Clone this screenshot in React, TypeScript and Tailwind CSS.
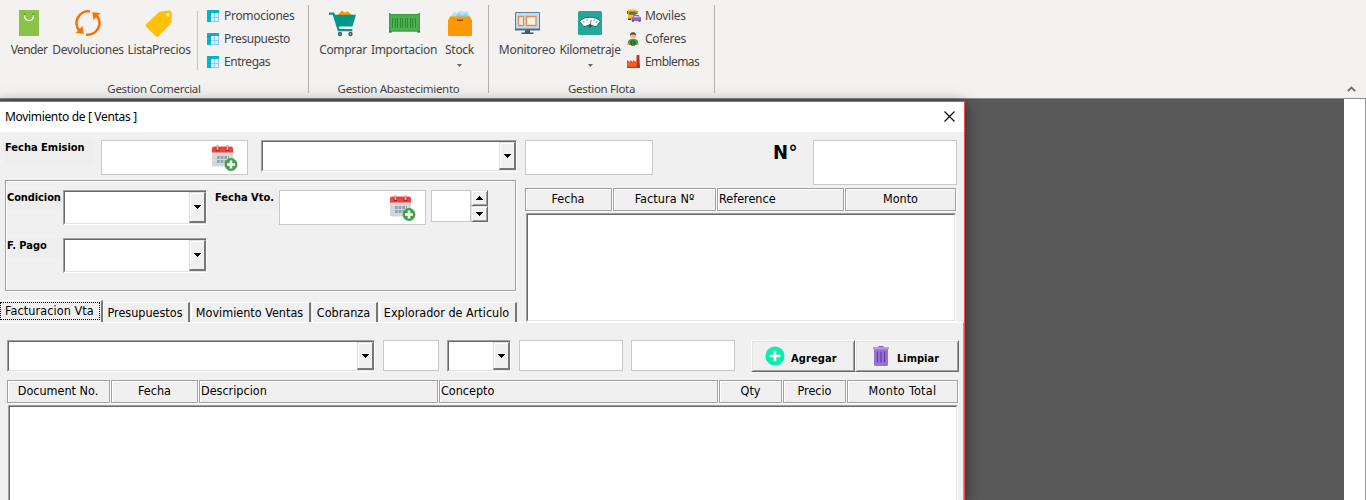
import React from "react";

type Kids = { children?: React.ReactNode };
type Box = { className?: string };

/* ---------- ribbon icons ---------- */

const BagIcon = () => (
  <svg width="20" height="26" viewBox="0 0 20 26">
    <path d="M0 0h20v26H0z" fill="#8bc34a" />
    <path d="M5.700 4.500v1.800a4.300 4.300 0 0 0 8.600 0V4.500" fill="none" stroke="#fff" strokeWidth="1.300" />
    <circle cx="5.700" cy="4.300" r="1.100" fill="#5f9632" />
    <circle cx="14.300" cy="4.300" r="1.100" fill="#5f9632" />
  </svg>
);

const RefreshIcon = () => (
  <svg width="26" height="26" viewBox="0 0 26 26">
    <g fill="none" stroke="#ff6f00" strokeWidth="2.600">
      <path d="M15 1.500A11.600 11.600 0 0 0 4.800 21" />
      <path d="M11 24.500A11.600 11.600 0 0 0 21.200 5" />
    </g>
    <path d="M17.300 2.300 25.500 3 18.500 10z" fill="#ff6f00" />
    <path d="M8.700 23.700.5 23l7-7z" fill="#ff6f00" />
  </svg>
);

const TagIcon = () => (
  <svg width="28" height="27" viewBox="0 0 28 27">
    <path d="M14.500 1.800 23.500.5a3 3 0 0 1 3.300 3l-.3 9.400-12.800 13a2.200 2.200 0 0 1-3.200 0L1.600 17a2.200 2.200 0 0 1 0-3.200z" fill="#ffc107" />
    <circle cx="22.800" cy="5" r="1.700" fill="#fff3c8" />
  </svg>
);

const GridIcon = () => (
  <svg width="12" height="12" viewBox="0 0 12 12">
    <path d="M0 0h12v12H0z" fill="#e3f2fd" />
    <path d="M4 7.500h8M7.500 3v9M4 11.500h8M11.500 3v9" stroke="#90caf9" fill="none" />
    <path d="M0 0h12v3H4v9H0z" fill="#00b8d0" />
    <path d="M0 3.500h4M0 7.500h4M3.500 0v3.500M7.500 0v3" stroke="#1493a6" fill="none" strokeWidth=".6" />
  </svg>
);

const CartIcon = () => (
  <svg width="28" height="27" viewBox="0 0 28 27">
    <path d="M8.500 5 13 .5l3 2.200 2.500-1.500L23 5z" fill="#ff9800" />
    <path d="M0 2.500h5l1.200 2.200H27l-3.600 11.800H9.800l.8 2.600h12.700v2.100H8.900L3.800 4.700H0z" fill="#009688" />
    <circle cx="11" cy="24" r="2.200" fill="#455a64" />
    <circle cx="21.500" cy="24" r="2.200" fill="#455a64" />
    <circle cx="11" cy="24" r=".8" fill="#b0bec5" />
    <circle cx="21.500" cy="24" r=".8" fill="#b0bec5" />
  </svg>
);

const ContainerIcon = () => (
  <svg width="31" height="20" viewBox="0 0 31 20">
    <path d="M0 0h1.500v1h28V0H31v19.500h-3v-.8H3v.8H0z" fill="#43a047" />
    <path d="M1.500 2.500h28v15h-28z" fill="#4caf50" />
    <path d="M3.500 5v10M6.500 5v10M8.500 5v10M11.500 5v10M13.500 5v10M16.500 5v10M18.500 5v10M21.500 5v10M23.500 5v10M26.500 5v10" stroke="#2f8a35" strokeWidth="1" />
    <path d="M0 18h2v1.500H0zM29 18h2v1.500h-2z" fill="#2e7d32" />
  </svg>
);

const BoxIcon = () => (
  <svg width="24" height="26" viewBox="0 0 24 26">
    <path d="M2.500 7 6 2l3 1 3-2.500L15.500 2l4-1L22 7z" fill="#bbdefb" />
    <path d="m6 7 5-4 3 2.500L18 3l3 4z" fill="#81d4fa" />
    <path d="m0 10.500 2.500-5V6.500h19v-1l2.500 5V25a1 1 0 0 1-1 1H1a1 1 0 0 1-1-1z" fill="#ff9800" />
    <path d="M9 9.500h6V11H9z" fill="#8a4b08" />
  </svg>
);

const MonitorIcon = () => (
  <svg width="25" height="23" viewBox="0 0 25 23">
    <path d="M10 18h5v2.500h3.500V22h-12v-1.500H10z" fill="#455a64" />
    <path d="M.5.5h24v17H.5z" fill="#bbdefb" stroke="#607d8b" />
    <path d="M0 16.500h25v2H0z" fill="#546e7a" />
    <path d="M3.500 4.500h5v9h-5zM11.500 4.500h9.500v9h-9.500z" fill="#fff3e0" stroke="#e38d54" strokeWidth="1.300" />
  </svg>
);

const ScaleIcon = () => (
  <svg width="24" height="24" viewBox="0 0 24 24">
    <rect width="24" height="24" rx="1.500" fill="#26a69a" />
    <path d="M1.800 10.500C5 4.800 19 4.800 22.200 10.500L18.500 15.500C16 16 14.500 14 12 14s-4 2-6.500 1.500z" fill="#fff" stroke="#00796b" strokeWidth="1" />
    <path d="m12.200 14 1-5M5 10.300l1.300 1.500M9 8.300l.4 1.600M16.500 8.600l-.6 1.400M19 10.300l-1.300 1.500" stroke="#546e7a" strokeWidth=".9" fill="none" />
    <circle cx="12" cy="14.800" r="1.600" fill="#37474f" />
  </svg>
);

const VehiclesIcon = () => (
  <svg width="14" height="13" viewBox="0 0 14 13">
    <path d="M0 2h1.500v3H0zM9 2h1.500v3H9z" fill="#455a64" />
    <path d="M1 .5h8.500V10H1z" fill="#ffc107" />
    <path d="M1.800 2.500h7v3.300h-7z" fill="#5d6b72" />
    <path d="M1 9.500h3V11H1z" fill="#37474f" />
    <path d="M6.700 6h5l1 2.200H14V12H4.500V8.200h1.300z" fill="#9c5fc0" />
    <path d="M7 7h4.500l.6 1.400H6.500z" fill="#b3c5fc" />
    <path d="M5 11.500h2v1.300H5zM11.500 11.500h2v1.300h-2z" fill="#512da8" />
  </svg>
);

const DriverIcon = () => (
  <svg width="12" height="14" viewBox="0 0 12 14">
    <path d="M1 13c-.5-4.500.5-6 5-6s5.500 1.500 5 6z" fill="#43a047" />
    <circle cx="6" cy="4" r="2.600" fill="#ffb74d" />
    <path d="M3 3.500C2.500-1 9.500-1 9 3.500 8 2 4 2 3 3.500z" fill="#424242" />
    <circle cx="6" cy="11" r="2.300" fill="none" stroke="#2f5a35" strokeWidth="1.100" />
    <path d="M4 11h4" stroke="#2f5a35" />
    <path d="M0 11.500h2V13H0zM10 11.500h2V13h-2z" fill="#ffb74d" />
  </svg>
);

const FactoryIcon = () => (
  <svg width="13" height="13" viewBox="0 0 13 13">
    <path d="M9.700 0h2.600l.7 12.500H9z" fill="#bf360c" />
    <path d="m0 5 3 2V5l3 2V5l3.300 2v5.500H0z" fill="#f4511e" />
    <path d="M0 12h13v1H0z" fill="#bf360c" />
    <path d="M1.500 8.500h1v1h-1zM4.300 8.500h1v1h-1zM7 8.500h1v1H7z" fill="#ffb300" />
  </svg>
);

/* ---------- ribbon ---------- */

const Tool = ({ icon, label, className, arrow }: { icon: React.ReactNode; label: string; className: string; arrow?: boolean }) => (
  <div className={`flex flex-none flex-col items-center ${className}`}>
    <div className="flex h-[42px] items-center justify-center pt-[4px]">{icon}</div>
    <div className="h-4 whitespace-nowrap leading-4">{label}</div>
    {arrow && (
      <svg className="mt-[6px]" width="5" height="3" viewBox="0 0 5 3"><path d="M0 0h5L2.500 3z" fill="#666" /></svg>
    )}
  </div>
);

const Mini = ({ icon, label, className = "" }: { icon: React.ReactNode; label: string; className?: string }) => (
  <div className="flex h-[23px] items-center">
    <div className="flex w-[17px] items-center">{icon}</div>
    <span className={className}>{label}</span>
  </div>
);

const Group = ({ label, className, children }: Kids & { label: string; className: string }) => (
  <div className={`flex flex-none flex-col border-r border-[#b1b1b1] ${className}`}>
    <div className="flex h-[76px] flex-none">{children}</div>
    <div className="-mb-4 flex-none text-center text-[11.5px] leading-4 tracking-[-0.3px]">{label}</div>
  </div>
);

const Ribbon = () => (
  <header className="flex h-[98px] bg-[#f3f2f1] pt-[5px] font-['Noto_Sans','Open_Sans',sans-serif] text-[12px] tracking-[-0.3px] text-[#444]">
    <div className="flex h-[88px] w-full">
      <Group label="Gestion Comercial" className="w-[309px]">
        <div className="-mt-[5px] flex">
          <Tool icon={<BagIcon />} label="Vender" className="ml-2 w-[42px] tracking-[-0.6px]" />
          <Tool icon={<RefreshIcon />} label="Devoluciones" className="ml-[2px] w-[72px]" />
          <Tool icon={<TagIcon />} label="ListaPrecios" className="ml-[3px] w-[64px]" />
          <div className="ml-[6px] mt-[11px] h-[59px] w-px bg-[#c8c6c4]" />
          <div className="ml-[9px] mt-[4px]">
            <Mini icon={<GridIcon />} label="Promociones" />
            <Mini icon={<GridIcon />} label="Presupuesto" className="tracking-[-0.45px]" />
            <Mini icon={<GridIcon />} label="Entregas" className="tracking-[-0.45px]" />
          </div>
        </div>
      </Group>
      <Group label="Gestion Abastecimiento" className="w-[180px]">
        <div className="-mt-[5px] flex">
          <Tool icon={<CartIcon />} label="Comprar" className="ml-[9px] w-[50px]" />
          <Tool icon={<ContainerIcon />} label="Importacion" className="ml-[3px] w-[66px]" />
          <Tool icon={<BoxIcon />} label="Stock" className="ml-[7px] w-[31px]" arrow />
        </div>
      </Group>
      <Group label="Gestion Flota" className="w-[226px]">
        <div className="-mt-[5px] flex">
          <Tool icon={<MonitorIcon />} label="Monitoreo" className="ml-[9px] w-[58px]" />
          <Tool icon={<ScaleIcon />} label="Kilometraje" className="ml-[3px] w-[62px]" arrow />
          <div className="ml-[6px] mt-[4px]">
            <Mini icon={<VehiclesIcon />} label="Moviles" className="pl-px" />
            <Mini icon={<DriverIcon />} label="Coferes" className="pl-px" />
            <Mini icon={<FactoryIcon />} label="Emblemas" className="pl-px tracking-[-0.6px]" />
          </div>
        </div>
      </Group>
      <svg className="ml-auto mr-[10px] mt-[81px]" width="9" height="6" viewBox="0 0 9 6">
        <path d="M.8 5.200 4.500 1.500l3.700 3.700" fill="none" stroke="#6b6b6b" strokeWidth="1.800" />
      </svg>
    </div>
  </header>
);

/* ---------- classic form controls ---------- */

const Field = ({ className = "", children }: Box & Kids) => (
  <div className={`flex-none border border-[#c8c8c8] bg-white ${className}`}>{children}</div>
);

const Caret = ({ up }: { up?: boolean }) => (
  <svg width="7" height="4" viewBox="0 0 7 4" shapeRendering="crispEdges">
    <path d={up ? "M3 0h1v1h1v1h1v1h1v1H0V3h1V2h1V1h1z" : "M0 0h7v1H6v1H5v1H4v1H3V3H2V2H1V1H0z"} fill="#000" />
  </svg>
);

const Combo = ({ className = "" }: Box) => (
  <div className={`flex-none border border-b-white border-l-[#a0a0a0] border-r-white border-t-[#a0a0a0] ${className}`}>
    <div className="flex h-full justify-end border border-r-0 border-b-[#e3e3e3] border-l-[#696969] border-t-[#696969] bg-white">
      <div className="flex w-[17px] items-center justify-center border-b-2 border-l border-r-2 border-t border-b-[#777] border-l-[#dcdcdc] border-r-[#777] border-t-[#e3e3e3] bg-[#f0f0f0] shadow-[inset_1px_1px_0_#fff]">
        <Caret />
      </div>
    </div>
  </div>
);

const SpinButton = ({ up }: { up?: boolean }) => (
  <div className="flex h-4 w-[17px] items-center justify-center border border-b-[#696969] border-l-[#e3e3e3] border-r-[#696969] border-t-[#e3e3e3] bg-[#f0f0f0] shadow-[inset_1px_1px_0_#fff,inset_-1px_-1px_0_#a0a0a0]">
    <Caret up={up} />
  </div>
);

const CalendarIcon = () => (
  <svg width="26" height="26" viewBox="0 0 26 26">
    <path d="M0 7h21v12.500a2 2 0 0 1-2 2H2a2 2 0 0 1-2-2z" fill="#cfd8dc" />
    <path d="M0 7.500V3.500a2 2 0 0 1 2-2h17a2 2 0 0 1 2 2v4z" fill="#f44336" />
    <path d="M5.500 2v4M15.500 2v4" stroke="#b71c1c" strokeWidth="3.400" />
    <path d="M5.500 0v5M15.500 0v5" stroke="#b0bec5" strokeWidth="2" />
    <path d="M5 12.500h12M5 16.500h9" stroke="#90a4ae" strokeWidth="3" strokeDasharray="2.700 1" />
    <circle cx="19" cy="19.500" r="6.400" fill="#43a047" />
    <path d="M19 15.500v8M15 19.500h8" stroke="#fff" strokeWidth="2.600" />
  </svg>
);

const DateField = () => (
  <Field className="flex h-[35px] w-[147px] items-start justify-end pr-[9px] pt-[4px]"><CalendarIcon /></Field>
);

const HeadCell = ({ className = "", children }: Box & Kids) => (
  <div className={`h-[23px] flex-none border border-[#a0a0a0] pt-[2px] text-center leading-4 shadow-[inset_1px_1px_0_#fff,1px_1px_0_#fff] ${className}`}>{children}</div>
);

const ListArea = ({ className = "" }: Box) => (
  <div className={`border border-b-white border-l-[#a0a0a0] border-r-white border-t-[#a0a0a0] ${className}`}>
    <div className="h-full border border-b-[#e3e3e3] border-l-[#696969] border-r-[#e3e3e3] border-t-[#696969] bg-white" />
  </div>
);

const Tab = ({ className = "", children }: Box & Kids) => (
  <div className={`h-[20px] flex-none whitespace-nowrap border-l border-r-2 border-t border-l-white border-r-[#777] border-t-white pr-[2px] pt-px text-center leading-[17px] ${className}`}>{children}</div>
);

const PushButton = ({ icon, className = "", children }: Box & Kids & { icon: React.ReactNode }) => (
  <div className={`flex h-8 w-[104px] flex-none items-center border border-b-[#696969] border-l-white border-r-[#696969] border-t-white text-[11px] font-bold shadow-[inset_1px_1px_0_#e3e3e3,inset_-1px_-1px_0_#a0a0a0] ${className}`}>
    {icon}
    <span className="pt-[6px]">{children}</span>
  </div>
);

const PlusIcon = () => (
  <svg width="20" height="20" viewBox="0 0 20 20">
    <circle cx="10" cy="10" r="9.600" fill="#0cecae" />
    <path d="M10 4.700v10.600M4.700 10h10.600" stroke="#fff" strokeWidth="2.600" />
  </svg>
);

const TrashIcon = () => (
  <svg width="16" height="20" viewBox="0 0 16 20">
    <path d="M5.500 0h5v1.500h-5z" fill="#7e57c2" />
    <path d="M1 3h14v15.500a1.500 1.500 0 0 1-1.500 1.500h-11A1.500 1.500 0 0 1 1 18.500z" fill="#9575cd" />
    <path d="M0 1h16v2.300H0z" fill="#b39ddb" />
    <path d="M4.500 5.500v11M8 5.500v11M11.500 5.500v11" stroke="#673ab7" strokeWidth="1.300" />
  </svg>
);

const Label = ({ className = "", children }: Box & Kids) => (
  <div className={`flex-none whitespace-nowrap bg-[#eee] pt-px text-[11px] font-bold leading-[14px] ${className}`}>{children}</div>
);

/* ---------- form ---------- */

const LeftPane = () => (
  <div className="flex h-[190px] w-[525px] flex-none flex-col">
    <div className="flex h-[48px] items-start pl-[5px] pt-2">
      <Label className="h-6 w-[88px]">Fecha Emision</Label>
      <div className="ml-2"><DateField /></div>
      <Combo className="ml-[13px] h-[32px] w-[256px]" />
    </div>
    <div className="ml-[5px] flex h-[111px] w-[511px] flex-col border border-[#a0a0a0] pl-px shadow-[inset_1px_1px_0_#fff,1px_1px_0_#fff]">
      <div className="flex h-[48px] items-start pt-[9px]">
        <Label className="h-5 w-[56px] tracking-[-0.1px]">Condicion</Label>
        <Combo className="h-[35px] w-[144px]" />
        <Label className="ml-[8px] h-5 w-[64px]">Fecha Vto.</Label>
        <DateField />
        <Field className="ml-[5px] h-[32px] w-[40px]" />
        <div className="flex flex-col"><SpinButton up /><SpinButton /></div>
      </div>
      <div className="flex items-start pt-[9px]">
        <Label className="h-5 w-[56px]">F. Pago</Label>
        <Combo className="h-[35px] w-[144px]" />
      </div>
    </div>
    <div className="mt-[10px] flex h-[21px] items-end">
      <div className="h-[22px] w-[103px] flex-none border-r-2 border-t border-r-[#777] border-t-white pt-[1px]">
        <div className="h-[18px] w-[100px] whitespace-nowrap border border-dotted border-black pl-[4px] leading-[16px] tracking-[0.1px]">Facturacion Vta</div>
      </div>
      <Tab className="w-[87px]">Presupuestos</Tab>
      <Tab className="ml-px w-[120px]">Movimiento Ventas</Tab>
      <Tab className="ml-px w-[66px]">Cobranza</Tab>
      <Tab className="ml-px w-[138px]">Explorador de Articulo</Tab>
    </div>
  </div>
);

const RightPane = () => (
  <div className="flex w-[433px] flex-none flex-col pt-2">
    <div className="flex h-[48px] items-start">
      <Field className="h-[35px] w-[128px]" />
      <span className="ml-[120px] w-[40px] text-[20px] font-bold leading-[25px] tracking-[0.5px]">N°</span>
      <Field className="h-[45px] w-[144px]" />
    </div>
    <div className="flex gap-px">
      <HeadCell className="w-[87px] pr-px">Fecha</HeadCell>
      <HeadCell className="w-[103px] tracking-[0.1px]">Factura Nº</HeadCell>
      <HeadCell className="w-[127px] pl-px !text-left">Reference</HeadCell>
      <HeadCell className="w-[111px]">Monto</HeadCell>
    </div>
    <ListArea className="ml-px mt-[2px] h-[110px] w-[430px]" />
  </div>
);

const FormWindow = () => (
  <section className="relative mt-[3px] flex h-[399px] w-[965px] flex-none flex-col overflow-visible border-r border-t border-[#f44a4a] bg-[#f0f0f0] shadow-[0_3px_14px_rgba(0,0,0,0.55)]">
    <div className="flex h-[30px] flex-none items-center justify-between bg-white pl-[5px] pr-[9px] font-['Noto_Sans','Open_Sans',sans-serif] text-[12px] tracking-[-0.33px]">
      <span>Movimiento de [ Ventas ]</span>
      <svg className="mb-[2px]" width="11" height="11" viewBox="0 0 11 11"><path d="m.5.5 10 10m0-10-10 10" stroke="#000" strokeWidth="1.100" /></svg>
    </div>
    <div className="flex h-[190px] flex-none">
      <LeftPane />
      <RightPane />
    </div>
    <div className="flex min-h-0 flex-1 flex-col border-r border-t border-r-[#a0a0a0] border-t-white pl-[7px] pt-[17px]">
      <div className="flex h-[40px] flex-none items-start">
        <Combo className="h-[32px] w-[368px]" />
        <Field className="ml-2 h-[31px] w-[56px]" />
        <Combo className="ml-2 h-[32px] w-[64px]" />
        <Field className="ml-2 h-[31px] w-[104px]" />
        <Field className="ml-2 h-[31px] w-[104px]" />
        <PushButton className="ml-4 gap-[6px] pl-[13px] tracking-[0.1px]" icon={<PlusIcon />}>Agregar</PushButton>
        <PushButton className="gap-2 pl-[17px]" icon={<TrashIcon />}>Limpiar</PushButton>
      </div>
      <div className="flex flex-none gap-px">
        <HeadCell className="w-[103px] pr-px">Document No.</HeadCell>
        <HeadCell className="w-[87px]">Fecha</HeadCell>
        <HeadCell className="w-[239px] pl-px !text-left">Descripcion</HeadCell>
        <HeadCell className="w-[279px] pl-px !text-left">Concepto</HeadCell>
        <HeadCell className="w-[63px]">Qty</HeadCell>
        <HeadCell className="w-[63px]">Precio</HeadCell>
        <HeadCell className="w-[111px] tracking-[0.3px]">Monto Total</HeadCell>
      </div>
      <ListArea className="-mb-1 ml-px mt-[2px] w-[950px] flex-1" />
    </div>
  </section>
);

export default function App() {
  return (
    <div className="flex h-[500px] w-[1366px] flex-col overflow-hidden bg-[#595959] font-['DejaVu_Sans_Condensed','DejaVu_Sans',sans-serif] text-[12.5px] text-black">
      <Ribbon />
      <div className="flex h-[402px] border-t border-[#8c8c8c]">
        <div className="-mt-px"><FormWindow /></div>
        <div className="ml-auto w-[22px] border-r border-[#999] bg-white" />
      </div>
    </div>
  );
}
